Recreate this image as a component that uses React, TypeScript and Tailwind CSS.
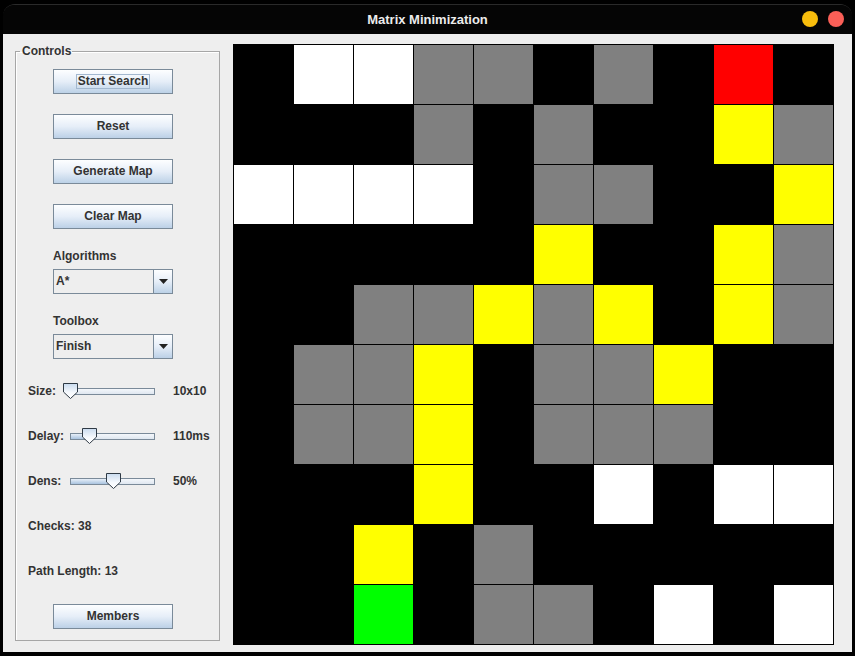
import React from 'react'

// k = wall, w = open, g = visited, y = path, r = start, G = goal
const GRID = [
  'kwwggkgkrk',
  'kkkgkgkkyg',
  'wwwwkggkky',
  'kkkkkykkyg',
  'kkggygykyg',
  'kggykggykk',
  'kggykgggkk',
  'kkkykkwkww',
  'kkykgkkkkk',
  'kkGkggkwkw',
]

const CELL_BG: Record<string, string> = {
  k: 'bg-black',
  w: 'bg-white',
  g: 'bg-[#808080]',
  y: 'bg-[#ffff00]',
  r: 'bg-[#ff0000]',
  G: 'bg-[#00ff00]',
}

const FONT = "[font-family:'Liberation_Sans',Arial,sans-serif]"

type SwingButtonProps = {
  label: string
  focused?: boolean
}

const SwingButton = ({ label, focused }: SwingButtonProps) => (
  <button
    type="button"
    className="flex h-[25px] w-[120px] items-center justify-center border border-[#7a8a99] bg-linear-to-b from-[#fdfeff] via-[#e6eef8] to-[#bcd1e7] pb-[1px] text-[12px] leading-[14px] font-bold text-[#333333]"
  >
    {focused ? <span className="border border-[#a3b8cf] px-[1px] leading-[13px]">{label}</span> : label}
  </button>
)

const ComboBox = ({ value }: { value: string }) => (
  <div className="flex h-[25px] w-[120px] border border-[#7a8a99] bg-[#eeeeee]">
    <div className="flex flex-1 items-center pb-[1px] pl-[2px] text-[12px] font-bold text-[#333333]">{value}</div>
    <div className="flex w-[19px] items-center justify-center border-l border-[#7a8a99] bg-linear-to-b from-[#fdfeff] via-[#e6eef8] to-[#bcd1e7]">
      <svg width="9" height="5" viewBox="0 0 9 5">
        <path d="M0 0 H9 L4.5 5 Z" fill="#222" />
      </svg>
    </div>
  </div>
)

type SliderRowProps = {
  label: string
  value: string
  fraction: number
}

const SliderRow = ({ label, value, fraction }: SliderRowProps) => {
  const thumbLeft = Math.round(fraction * 85)
  return (
    <div className="ml-[12px] flex h-[16px] items-center text-[12px] leading-[14px] font-bold text-[#333333]">
      <span className="w-[35px]">{label}</span>
      <div className="relative h-[16px] w-[99px]">
        <div className="absolute top-[5px] right-[7px] left-[7px] h-[7px] border border-[#7a8a99] bg-linear-to-b from-[#f4f7fb] to-[#dfe7f0]">
          <div
            className="h-full bg-linear-to-b from-[#e8f0f9] to-[#a9c3df]"
            style={{ width: `${thumbLeft}px` }}
          />
        </div>
        <svg
          className="absolute top-0"
          style={{ left: `${thumbLeft}px` }}
          width="15"
          height="16"
          viewBox="0 0 15 16"
        >
          <defs>
            <linearGradient id={`thumb-${label}`} x1="0" y1="0" x2="0" y2="1">
              <stop offset="0" stopColor="#c9dbef" />
              <stop offset="0.6" stopColor="#f6f9fd" />
              <stop offset="1" stopColor="#ffffff" />
            </linearGradient>
          </defs>
          <path
            d="M0.5 0.5 H14.5 V9 L7.5 15.5 L0.5 9 Z"
            fill={`url(#thumb-${label})`}
            stroke="#2f3a45"
            strokeWidth="1"
          />
        </svg>
      </div>
      <span className="ml-[11px]">{value}</span>
    </div>
  )
}

const ControlsPanel = () => (
  <fieldset className="h-[597px] w-[205px] border border-[#a6a6a6] shadow-[inset_1px_1px_0_#ffffff]">
    <legend className="ml-[4px] pr-[1px] pl-[2px] text-[12px] leading-[14px] font-bold text-[#333333]">Controls</legend>
    <div className="flex flex-col">
      <div className="ml-[37px] flex flex-col">
        <div className="mt-[11px]">
          <SwingButton label="Start Search" focused />
        </div>
        <div className="mt-[20px]">
          <SwingButton label="Reset" />
        </div>
        <div className="mt-[20px]">
          <SwingButton label="Generate Map" />
        </div>
        <div className="mt-[20px]">
          <SwingButton label="Clear Map" />
        </div>
        <div className="mt-[20px] text-[12px] leading-[14px] font-bold text-[#333333]">Algorithms</div>
        <div className="mt-[6px]">
          <ComboBox value="A*" />
        </div>
        <div className="mt-[20px] text-[12px] leading-[14px] font-bold text-[#333333]">Toolbox</div>
        <div className="mt-[6px]">
          <ComboBox value="Finish" />
        </div>
      </div>
      <div className="mt-[24px]">
        <SliderRow label="Size:" value="10x10" fraction={0} />
      </div>
      <div className="mt-[29px]">
        <SliderRow label="Delay:" value="110ms" fraction={0.2235} />
      </div>
      <div className="mt-[29px]">
        <SliderRow label="Dens:" value="50%" fraction={0.506} />
      </div>
      <div className="mt-[30px] ml-[12px] text-[12px] leading-[14px] font-bold text-[#333333]">Checks: 38</div>
      <div className="mt-[31px] ml-[12px] text-[12px] leading-[14px] font-bold text-[#333333]">Path Length: 13</div>
      <div className="mt-[26px] ml-[37px]">
        <SwingButton label="Members" />
      </div>
    </div>
  </fieldset>
)

const MatrixGrid = () => (
  <div className="grid grid-cols-[repeat(10,60px)] grid-rows-[repeat(10,60px)] self-start border-r border-b border-black">
    {GRID.flatMap((row, r) =>
      row.split('').map((c, col) => (
        <div key={`${r}-${col}`} className={`h-[60px] w-[60px] border-t border-l border-black ${CELL_BG[c]}`} />
      )),
    )}
  </div>
)

export default function App() {
  return (
    <div className={`h-[656px] w-[855px] overflow-hidden bg-black pt-[4px] pl-[3px] ${FONT}`}>
      <div className="w-[849px] overflow-hidden rounded-t-[12px] border-t border-[#2a2a2a]">
        <div className="relative flex h-[29px] items-center justify-center bg-[#050505]">
          <span className="text-[13px] font-bold text-[#ececec]">Matrix Minimization</span>
          <div className="absolute top-[6px] right-[8px] flex gap-[10px]">
            <span className="h-[16px] w-[16px] rounded-full bg-[#f8bd0c]" />
            <span className="h-[16px] w-[16px] rounded-full bg-[#fa5f57]" />
          </div>
        </div>
        <div className="flex h-[618px] items-start gap-[13px] bg-[#eeeeee] pt-[10px] pl-[12px]">
          <ControlsPanel />
          <MatrixGrid />
        </div>
      </div>
    </div>
  )
}
